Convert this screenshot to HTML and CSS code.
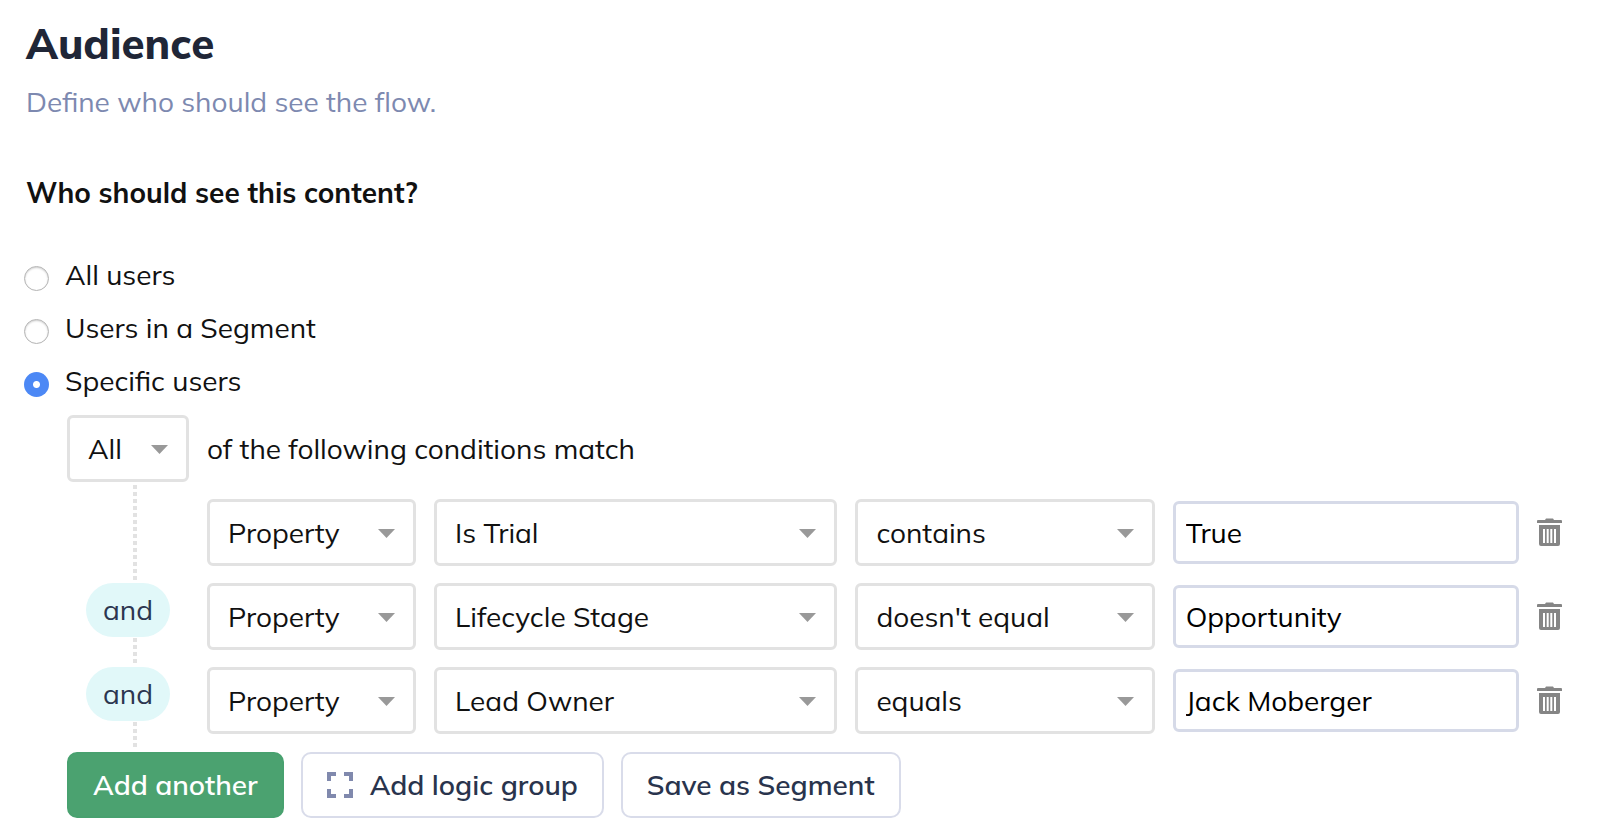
FILE: index.html
```html
<!DOCTYPE html>
<html lang="en">
<head>
  <meta charset="UTF-8">
  <meta name="viewport" content="width=device-width, initial-scale=1.0">
  <title>Audience</title>
  <link rel="stylesheet" href="styles.css">
</head>
<body>
<!-- Trash icon, shared by all rows -->
<svg class="sprite" aria-hidden="true">
  <symbol id="trash" viewBox="0 0 25 29">
    <path fill-rule="evenodd" d="M0 3 Q0 2 1 2 H8 L9 .5 H16 L17 2 H24 Q25 2 25 3 V5 H0 Z M2 7 H23 V26 Q23 28 21 28 H4 Q2 28 2 26 Z M6 11 V25 H8 V11 Z M9.700 11 V25 H11.700 V11 Z M13.300 11 V25 H15.300 V11 Z M17 11 V25 H19 V11 Z"/>
  </symbol>
</svg>

<main class="audience">
  <h1 class="title">Audience</h1>
  <p class="subtitle">Define who should see the flow.</p>

  <form>
    <fieldset class="who">
      <legend class="question">Who should see this content?</legend>
      <label class="option"><input type="radio" name="who" class="radio"> All users</label>
      <label class="option"><input type="radio" name="who" class="radio"> Users in a Segment</label>
      <label class="option"><input type="radio" name="who" class="radio" checked> Specific users</label>
    </fieldset>

    <div class="builder">
      <div class="match">
        <select class="select match-select" id="match"><option>All</option><option>Any</option></select>
        <label for="match">of the following conditions match</label>
      </div>

      <div class="conditions">
        <div class="rail">
          <div class="line line-first"></div>
          <span class="pill">and</span>
          <div class="line"></div>
          <span class="pill">and</span>
          <div class="line"></div>
        </div>

        <div class="rows">
          <div class="row">
            <select class="select" aria-label="Type"><option>Property</option></select>
            <select class="select" aria-label="Name"><option>Is Trial</option></select>
            <select class="select" aria-label="Operator"><option>contains</option></select>
            <input type="text" class="value" aria-label="Value" value="True">
            <button type="button" class="delete" aria-label="Delete"><svg class="trash"><use href="#trash"/></svg></button>
          </div>
          <div class="row">
            <select class="select" aria-label="Type"><option>Property</option></select>
            <select class="select" aria-label="Name"><option>Lifecycle Stage</option></select>
            <select class="select" aria-label="Operator"><option>doesn't equal</option></select>
            <input type="text" class="value" aria-label="Value" value="Opportunity">
            <button type="button" class="delete" aria-label="Delete"><svg class="trash"><use href="#trash"/></svg></button>
          </div>
          <div class="row">
            <select class="select" aria-label="Type"><option>Property</option></select>
            <select class="select" aria-label="Name"><option>Lead Owner</option></select>
            <select class="select" aria-label="Operator"><option>equals</option></select>
            <input type="text" class="value" aria-label="Value" value="Jack Moberger">
            <button type="button" class="delete" aria-label="Delete"><svg class="trash"><use href="#trash"/></svg></button>
          </div>
        </div>
      </div>

      <div class="actions">
        <button type="button" class="button button-green">Add another</button>
        <button type="button" class="button">
          <svg class="group-icon" viewBox="0 0 26 26" aria-hidden="true">
            <path d="M2 9 V2 H9 M17 2 H24 V9 M24 17 V24 H17 M9 24 H2 V17"/>
          </svg>
          Add logic group
        </button>
        <button type="button" class="button">Save as Segment</button>
      </div>
    </div>
  </form>
</main>
</body>
</html>
```
FILE: styles.css
```css
* {
  box-sizing: border-box;
}

body {
  margin: 0;
  background: #fff;
  color: #111;
  font-family: Mulish, "Open Sans", sans-serif;
  font-size: 28px;
  line-height: 40px;
}

button,
input,
select {
  font: inherit;
  color: inherit;
  margin: 0;
}

.sprite {
  display: none;
}

.audience {
  padding: 16px 38px 20px 26px;
}

.title {
  margin: 0;
  color: #202637;
  font-size: 42px;
  font-weight: 800;
  line-height: 56px;
}

.subtitle {
  margin: 10px 0 51px;
  color: #7d89b0;
}

.who {
  display: flex;
  flex-direction: column;
  gap: 13px;
  margin: 0;
  padding: 0;
  border: none;
}

.question {
  margin-bottom: 42px;
  padding: 0;
  font-weight: 700;
}

.option {
  display: flex;
  align-items: flex-start;
  gap: 16px;
  margin-left: -2px;
}

.radio {
  appearance: none;
  flex: none;
  width: 25px;
  height: 25px;
  margin-top: 11px;
  border: 1px solid #b4b4b4;
  border-radius: 50%;
  background: #fff;
  box-shadow: inset 0 1px 2px rgba(0, 0, 0, 0.2);
}

.radio:checked {
  border: none;
  background: radial-gradient(circle, #fff 3px, #4c88f5 4px);
  box-shadow: none;
}

.builder {
  margin: 14px 0 0 41px;
}

.match {
  display: flex;
  align-items: center;
  gap: 18px;
}

.select {
  appearance: none;
  width: 100%;
  min-width: 0;
  height: 67px;
  padding: 0 44px 0 18px;
  border: 3px solid #e2e2e2;
  border-radius: 6px;
  background: #fff url("data:image/svg+xml,%3Csvg xmlns='http://www.w3.org/2000/svg' width='17' height='9'%3E%3Cpath d='M0 0h17L8.500 9z' fill='%23999'/%3E%3C/svg%3E") no-repeat right 18px top 27px;
}

.match-select {
  width: 122px;
}

.conditions {
  display: flex;
}

/* dotted line with the "and" pills, left of the rows */
.rail {
  display: flex;
  flex-direction: column;
  flex: none;
  width: 140px;
}

.line {
  width: 4px;
  height: 29px;
  margin: 1px 0 0 66px;
  background: repeating-linear-gradient(#e2e2e2 0 4px, transparent 4px 7px);
  background-size: 4px 28px;
  background-repeat: no-repeat;
}

.line-first {
  height: 98px;
  margin-top: 3px;
  background-size: auto;
}

.pill {
  width: 84px;
  margin-left: 19px;
  padding: 7px 0;
  border-radius: 27px;
  background: #e1f8f9;
  color: #2c3650;
  text-align: center;
}

.rows {
  display: flex;
  flex: 1;
  flex-direction: column;
  gap: 17px;
  min-width: 0;
  padding: 17px 0 18px;
}

.row {
  display: grid;
  grid-template-columns: 209px minmax(0, 403fr) minmax(0, 299fr) minmax(0, 346fr) 25px;
  align-items: center;
  gap: 18px;
}

.value {
  width: 100%;
  height: 63px;
  padding: 0 10px;
  border: 3px solid #d6dae8;
  border-radius: 6px;
  background: #fff;
  color: #000;
}

.delete {
  display: flex;
  padding: 0;
  border: none;
  background: none;
  cursor: pointer;
}

.trash {
  width: 25px;
  height: 29px;
  fill: #858585;
}

.actions {
  display: flex;
  flex-wrap: wrap;
  gap: 17px;
}

.button {
  display: flex;
  align-items: center;
  gap: 17px;
  height: 66px;
  padding: 0 24px;
  border: 2px solid #d9dcea;
  border-radius: 10px;
  background: #fff;
  color: #29344d;
  font-weight: 600;
  cursor: pointer;
}

.button-green {
  border-color: #48a16f;
  background: #4ba270;
  color: #fff;
}

.group-icon {
  width: 26px;
  height: 26px;
  fill: none;
  stroke: #8089ad;
  stroke-width: 4;
}
```
